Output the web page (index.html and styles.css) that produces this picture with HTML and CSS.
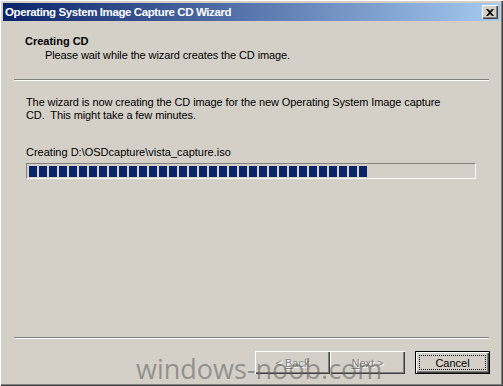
FILE: index.html
```html
<!DOCTYPE html>
<html lang="en">
<head>
  <meta charset="UTF-8">
  <title>Operating System Image Capture CD Wizard</title>
  <link rel="stylesheet" href="styles.css">
</head>
<body>
  <div class="window">
    <div class="titlebar">
      <span class="title">Operating System Image Capture CD Wizard</span>
      <button class="btn-close" aria-label="Close">
        <svg width="8" height="7" viewBox="0 0 8 7"><path d="M0 0h2l2 2 2-2h2L5 3.5 8 7H6L4 5 2 7H0l3-3.5z" fill="#000"/></svg>
      </button>
    </div>

    <div class="wizard-header">
      <h1>Creating CD</h1>
      <p>Please wait while the wizard creates the CD image.</p>
    </div>
    <hr class="etched">

    <div class="wizard-body">
      <p class="intro">The wizard is now creating the CD image for the new Operating System Image capture CD.&nbsp; This might take a few minutes.</p>
      <p class="status">Creating D:\OSDcapture\vista_capture.iso</p>
      <div class="progress">
        <div class="progress-fill" id="fill"></div>
      </div>
    </div>

    <hr class="etched">
    <div class="buttons">
      <button class="btn" disabled>&lt; <u>B</u>ack</button>
      <button class="btn" disabled><u>N</u>ext &gt;</button>
      <button class="btn btn-default"><span class="focus">Cancel</span></button>
    </div>

    <div class="watermark">windows-noob.com</div>
  </div>

<script>
  // 34 blocos no progresso
  var fill = document.getElementById('fill');
  for (var i = 0; i < 34; i++) {
    var b = document.createElement('span');
    b.className = 'block';
    fill.appendChild(b);
  }
</script>
</body>
</html>
```

FILE: styles.css
```css
/* Base */
:root {
  --face: #d4d0c8;
  --shadow: #808080;
  --dark: #404040;
  --light: #ffffff;
  --navy: #0a246a;
}

* {
  margin: 0;
  padding: 0;
  box-sizing: border-box;
}

body {
  background: var(--face);
  font-family: 'Liberation Sans', Arial, sans-serif;
  font-size: 11px;
  color: #000;
}

/* Janela */
.window {
  position: relative;
  width: 503px;
  height: 386px;
  background: var(--face);
  padding: 3px 3px 0 3px;
  box-shadow: inset 1px 1px 0 var(--light), inset -1px -1px 0 var(--dark), inset -2px -2px 0 var(--shadow);
  overflow: hidden;
  display: flex;
  flex-direction: column;
}

.titlebar {
  height: 18px;
  background: linear-gradient(to right, var(--navy), #a6caf0);
  display: flex;
  align-items: center;
  justify-content: space-between;
  padding: 0 2px 0 2px;
}

.title {
  color: #fff;
  font-weight: bold;
  font-size: 11.5px;
  letter-spacing: -0.4px;
  font-family: 'Liberation Sans', Arial, sans-serif;
}

.btn-close {
  width: 16px;
  height: 14px;
  background: var(--face);
  border: none;
  display: flex;
  align-items: center;
  justify-content: center;
  box-shadow: inset 1px 1px 0 var(--light), inset -1px -1px 0 var(--dark), inset -2px -2px 0 var(--shadow);
}

/* Cabeçalho */
.wizard-header {
  padding: 14px 0 0 22px;
  height: 58px;
}

.wizard-header h1 {
  font-size: 11px;
  font-weight: bold;
  line-height: 13px;
}

.wizard-header p {
  padding-left: 20px;
  line-height: 13px;
  margin-top: 1px;
  letter-spacing: -0.1px;
}

.etched {
  border: none;
  height: 2px;
  margin: 0 11px;
  border-top: 1px solid var(--shadow);
  border-bottom: 1px solid var(--light);
}

/* Corpo */
.wizard-body {
  padding: 15px 0 0 23px;
  height: 256px;
}

.intro {
  width: 430px;
  line-height: 13px;
  letter-spacing: -0.1px;
}

.status {
  margin-top: 24px;
  line-height: 13px;
}

.progress {
  margin-top: 4px;
  width: 450px;
  height: 16px;
  border-top: 1px solid var(--shadow);
  border-left: 1px solid var(--shadow);
  border-bottom: 1px solid var(--light);
  border-right: 1px solid var(--light);
  padding: 2px 0 0 2px;
}

.progress-fill {
  display: flex;
  gap: 2px;
}

.block {
  width: 8px;
  height: 11px;
  background: var(--navy);
}

/* Botões */
.buttons {
  display: flex;
  justify-content: flex-end;
  padding: 12px 10px 0 0;
}

.btn {
  width: 75px;
  height: 23px;
  background: var(--face);
  border: none;
  font-family: inherit;
  font-size: 11px;
  box-shadow: inset 1px 1px 0 var(--light), inset -1px -1px 0 var(--dark), inset -2px -2px 0 var(--shadow);
}

.btn[disabled] {
  color: var(--shadow);
  text-shadow: 1px 1px 0 var(--light);
}

.btn-default {
  margin-left: 10px;
  border: 1px solid #000;
  padding: 3px;
}

.focus {
  display: block;
  height: 100%;
  line-height: 13px;
  padding-top: 1px;
  border: 1px dotted #000;
}

.watermark {
  position: absolute;
  left: 136px;
  top: 350px;
  font-family: 'Open Sans', sans-serif;
  font-size: 27px;
  color: rgba(90, 90, 90, 0.55);
  pointer-events: none;
}
```
